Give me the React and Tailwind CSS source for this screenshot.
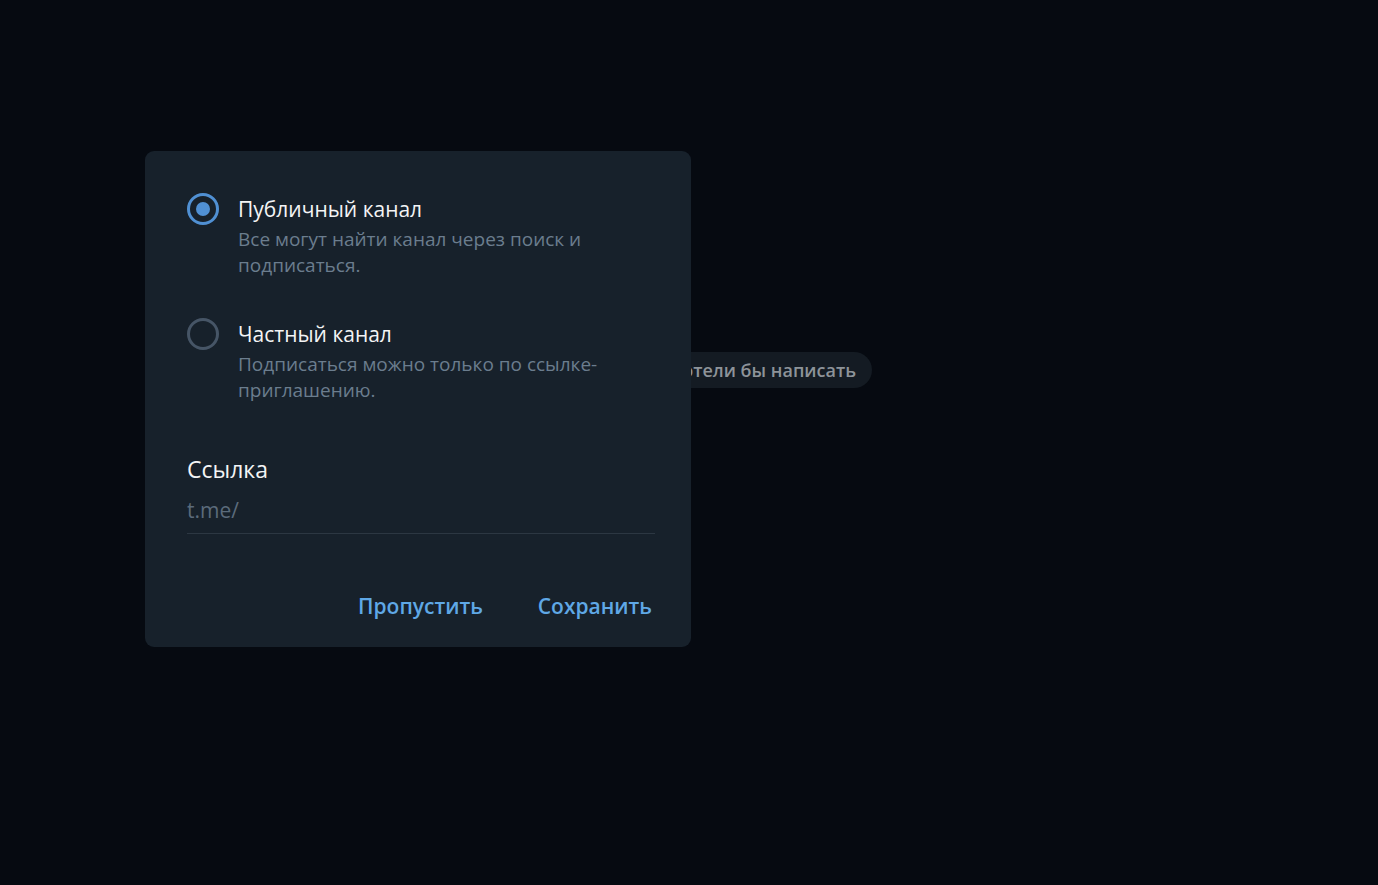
export default function App() {
  const font = { fontFamily: '"Open Sans", "Noto Sans", sans-serif' };
  return (
    <div className="relative w-full h-[885px] bg-[#060a11] overflow-hidden" style={font}>
      <div className="flex justify-end pt-[352px] pr-[506px]">
        <div className="h-9 rounded-full bg-[#141b23] pl-5 pr-4 flex items-center text-[18px] font-semibold text-[#8d9399]">
          Выберите, кому хотели бы написать
        </div>
      </div>

      <div className="absolute left-[145px] top-[151px] w-[546px] h-[496px] rounded-[9px] bg-[#17212b] pt-[42px] pl-[42px] pr-[36px] flex flex-col">
        <div className="flex items-start">
          <div className="w-8 h-8 shrink-0 rounded-full border-[3px] border-[#5090d3] flex items-center justify-center">
            <div className="w-[14px] h-[14px] rounded-full bg-[#5090d3]"></div>
          </div>
          <div className="ml-[19px] mt-[3px]">
            <div className="text-[21px] leading-[26px] text-[#f3f4f5]">Публичный канал</div>
            <div className="mt-1 text-[19px] leading-[26px] text-[#6b7d8e] w-[410px]">
              Все могут найти канал через поиск и подписаться.
            </div>
          </div>
        </div>

        <div className="flex items-start mt-[40px]">
          <div className="w-8 h-8 shrink-0 rounded-full border-[3px] border-[#465566]"></div>
          <div className="ml-[19px] mt-[3px]">
            <div className="text-[21px] leading-[26px] text-[#f3f4f5]">Частный канал</div>
            <div className="mt-1 text-[19px] leading-[26px] text-[#6b7d8e] w-[410px]">
              Подписаться можно только по ссылке-приглашению.
            </div>
          </div>
        </div>

        <div className="mt-[52px] text-[23px] leading-[28px] text-[#f3f4f5]">Ссылка</div>
        <div className="mt-[13px] h-[38px] border-b border-[#2c3742] flex items-start">
          <span className="text-[21px] leading-[28px] text-[#5b6b7b]">t.me/</span>
        </div>

        <div className="mt-auto mb-[27px] flex justify-end gap-[55px] pr-[3px]">
          <button className="text-[21px] leading-[28px] font-semibold text-[#5fa8e6]">Пропустить</button>
          <button className="text-[21px] leading-[28px] font-semibold text-[#5fa8e6]">Сохранить</button>
        </div>
      </div>
    </div>
  );
}
